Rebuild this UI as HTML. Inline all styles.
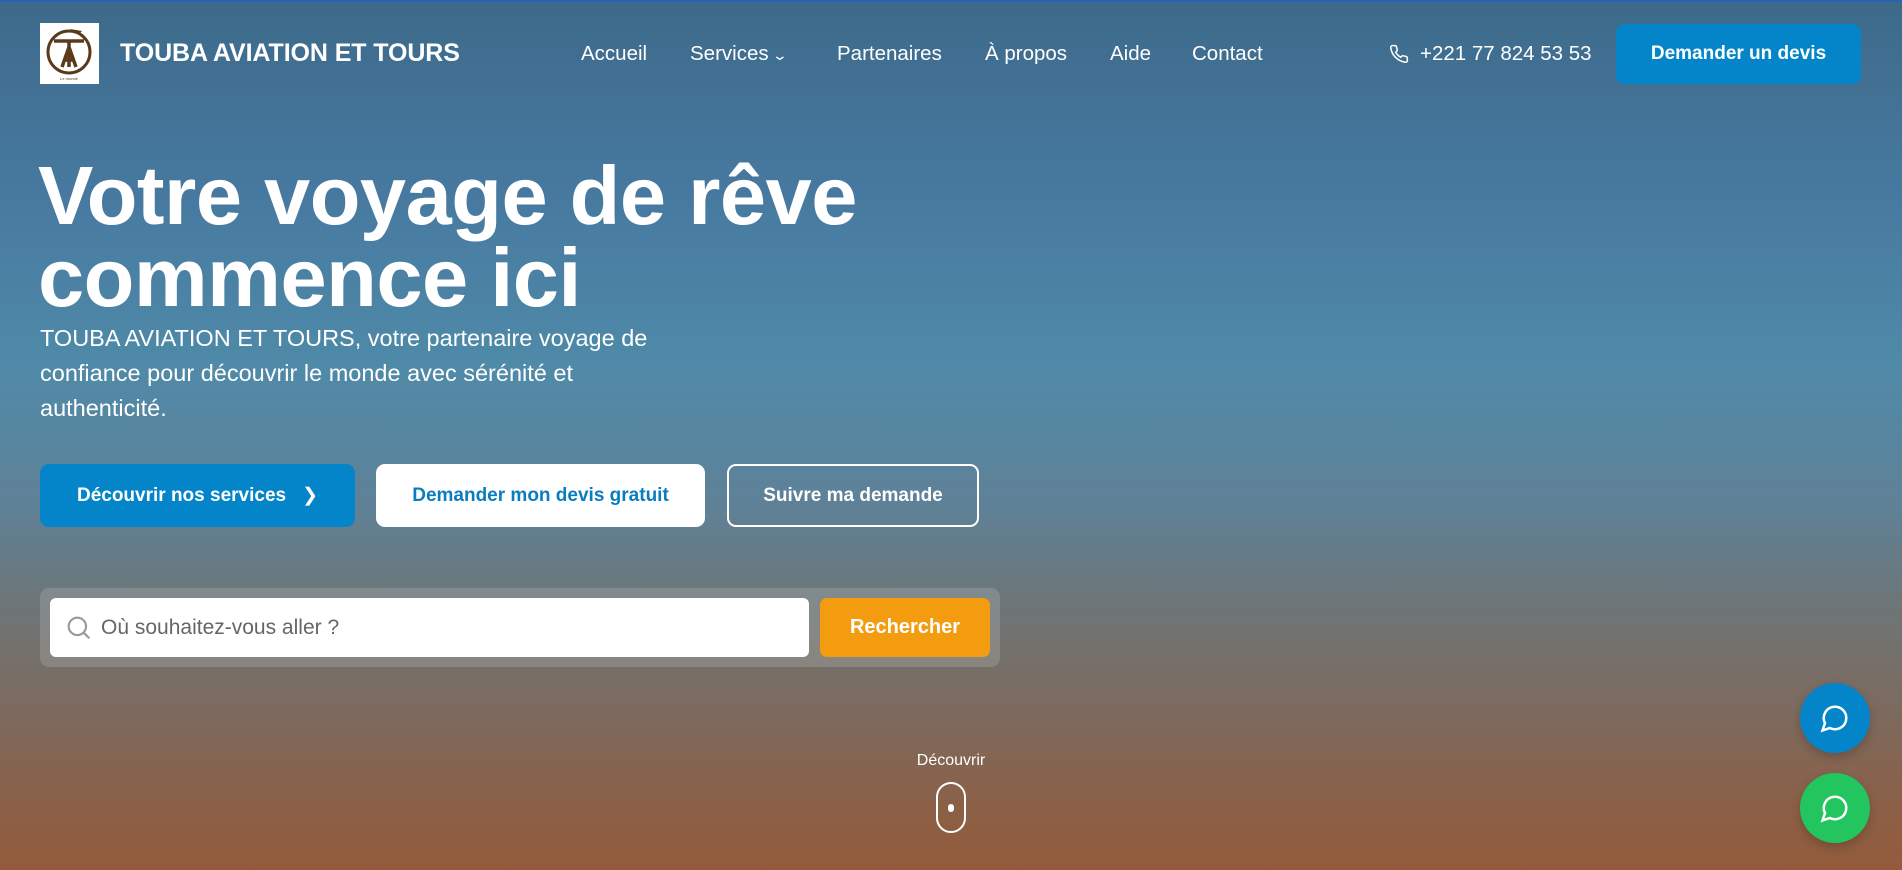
<!DOCTYPE html>
<html><head><meta charset="utf-8"><style>
*{margin:0;padding:0;box-sizing:border-box}
html,body{width:1902px;height:870px;overflow:hidden}
body{font-family:"Liberation Sans",sans-serif;color:#fff;position:relative;
background:linear-gradient(180deg,#3d6a8a 0%,#4779a0 22%,#4f8aa8 42%,#5f8197 58%,#6e7576 70%,#7d6a5e 82%,#8d5f44 94%,#935b3c 100%);border-top:2px solid #2c62b0}
.a{position:absolute}
.logo{left:40px;top:21px;width:59px;height:61px;background:#fff}
.brand{left:120px;top:37px;font-size:25px;font-weight:bold;letter-spacing:-0.1px}
.nav{top:40px;font-size:20.5px}
.btn{display:flex;align-items:center;justify-content:center;border-radius:9px;font-weight:bold;font-size:19px}
h1{position:absolute;left:38px;top:153px;font-size:83px;line-height:82px;font-weight:bold;letter-spacing:-0.5px}
.p{left:40px;top:319px;width:640px;font-size:23.5px;line-height:35px}
</style></head><body>
<div class="a logo"><svg width="59" height="61" viewBox="0 0 59 61"><circle cx="29" cy="29" r="21" fill="none" stroke="#5a3a1a" stroke-width="3"/><path d="M14 18h30M29 18v26M22 44l7-20 7 20M25 37h8" stroke="#5a3a1a" stroke-width="3.5" fill="none"/><path d="M30 6l12 2-3 3z" fill="#5a3a1a"/><text x="29" y="57" font-size="4" text-anchor="middle" fill="#5a3a1a">Le monde</text></svg></div>
<div class="a brand">TOUBA AVIATION ET TOURS</div>
<div class="a nav" style="left:581px">Accueil</div>
<div class="a nav" style="left:690px">Services <span style="font-size:14px;display:inline-block;transform:scaleX(1.4)">&#8964;</span></div>
<div class="a nav" style="left:837px">Partenaires</div>
<div class="a nav" style="left:985px">À propos</div>
<div class="a nav" style="left:1110px">Aide</div>
<div class="a nav" style="left:1192px">Contact</div>
<svg class="a" style="left:1389px;top:42px" width="20" height="20" viewBox="0 0 24 24" fill="none" stroke="#fff" stroke-width="1.8"><path d="M22 16.9v3a2 2 0 0 1-2.2 2 19.8 19.8 0 0 1-8.6-3.1 19.5 19.5 0 0 1-6-6A19.8 19.8 0 0 1 2.1 4.2 2 2 0 0 1 4.1 2h3a2 2 0 0 1 2 1.7c.1 1 .4 1.9.7 2.8a2 2 0 0 1-.5 2.1L8 9.9a16 16 0 0 0 6 6l1.3-1.3a2 2 0 0 1 2.1-.4c.9.3 1.8.6 2.8.7a2 2 0 0 1 1.7 2z"/></svg>
<div class="a nav" style="left:1420px">+221 77 824 53 53</div>
<div class="a btn" style="left:1616px;top:22px;width:245px;height:60px;background:#0585c9">Demander un devis</div>
<h1>Votre voyage de rêve<br>commence ici</h1>
<div class="a p">TOUBA AVIATION ET TOURS, votre partenaire voyage de confiance pour découvrir le monde avec sérénité et authenticité.</div>
<div class="a btn" style="left:40px;top:462px;width:315px;height:63px;background:#0585c9">Découvrir nos services <span style="margin-left:16px;font-weight:normal">&#x276F;</span></div>
<div class="a btn" style="left:376px;top:462px;width:329px;height:63px;background:#fff;color:#0a7cc0">Demander mon devis gratuit</div>
<div class="a btn" style="left:727px;top:462px;width:252px;height:63px;border:2px solid #fff">Suivre ma demande</div>
<div class="a" style="left:40px;top:586px;width:960px;height:79px;background:rgba(255,255,255,0.15);border-radius:9px"></div>
<div class="a" style="left:50px;top:596px;width:759px;height:59px;background:#fff;border-radius:6px"></div>
<svg class="a" style="left:66px;top:613px" width="26" height="26" viewBox="0 0 24 24" fill="none" stroke="#999" stroke-width="2"><circle cx="10.5" cy="10.5" r="8"/><path d="M16.5 16.5l5 5"/></svg>
<div class="a" style="left:101px;top:614px;font-size:21px;color:#666">Où souhaitez-vous aller ?</div>
<div class="a btn" style="left:820px;top:596px;width:170px;height:59px;background:#f39c0f;border-radius:7px;font-size:20px">Rechercher</div>
<div class="a" style="left:910px;top:750px;width:82px;text-align:center;font-size:16px">Découvrir</div>
<div class="a" style="left:936px;top:780px;width:30px;height:51px;border:2px solid #fff;border-radius:15px"></div>
<div class="a" style="left:948px;top:802px;width:6px;height:8px;background:#fff;border-radius:3px"></div>
<div class="a" style="left:1800px;top:681px;width:70px;height:70px;border-radius:50%;background:#0585c9;box-shadow:0 4px 10px rgba(0,0,0,.2)"></div>
<div class="a" style="left:1800px;top:771px;width:70px;height:70px;border-radius:50%;background:#22c55e;box-shadow:0 4px 10px rgba(0,0,0,.2)"></div>
<svg class="a" style="left:1820px;top:701px" width="30" height="30" viewBox="0 0 24 24" fill="none" stroke="#fff" stroke-width="2"><path d="M7.9 20A9 9 0 1 0 4 16.1L2 22z"/></svg>
<svg class="a" style="left:1820px;top:791px" width="30" height="30" viewBox="0 0 24 24" fill="none" stroke="#fff" stroke-width="2"><path d="M7.9 20A9 9 0 1 0 4 16.1L2 22z"/></svg>
</body></html>
